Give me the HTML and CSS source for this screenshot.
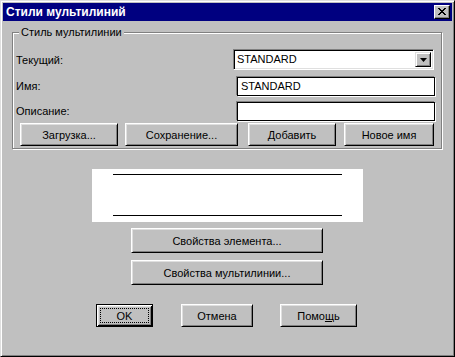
FILE: index.html
```html
<!DOCTYPE html>
<html lang="ru">

<head>
  <meta charset="UTF-8">
  <title>Стили мультилиний</title>
  <link rel="stylesheet" href="styles.css">
</head>

<body>
  <div class="window">
    <div class="titlebar">
      <span class="title">Стили мультилиний</span>
      <span class="close-btn">
        <svg width="8" height="7" viewBox="0 0 8 7">
          <path d="M0 0h2v1h-2zM6 0h2v1h-2zM1 1h2v1h-2zM5 1h2v1h-2zM2 2h4v1h-4zM3 3h2v1h-2zM2 4h4v1h-4zM1 5h2v1h-2zM5 5h2v1h-2zM0 6h2v1h-2zM6 6h2v1h-2z" fill="#000"/>
        </svg>
      </span>
    </div>

    <div class="content">
      <div class="group">
        <span class="legend">Стиль мультилинии</span>

        <div class="row row-combo">
          <span class="label">Текущий:</span>
          <div class="combo">
            <span class="combo-text">STANDARD</span>
            <span class="combo-arrow">
              <svg width="7" height="4" viewBox="0 0 7 4">
                <path d="M0 0h7l-3.5 4z" fill="#000"/>
              </svg>
            </span>
          </div>
        </div>

        <div class="row">
          <span class="label">Имя:</span>
          <div class="textbox">STANDARD</div>
        </div>

        <div class="row row-last">
          <span class="label">Описание:</span>
          <div class="textbox"></div>
        </div>

        <div class="btn-row">
          <button class="btn btn-load">Загрузка...</button>
          <button class="btn btn-save">Сохранение...</button>
          <button class="btn btn-add">Добавить</button>
          <button class="btn btn-rename">Новое имя</button>
        </div>
      </div>

      <div class="preview">
        <div class="preview-line"></div>
        <div class="preview-line"></div>
      </div>

      <div class="props">
        <button class="btn btn-wide">Свойства элемента...</button>
        <button class="btn btn-wide">Свойства мультилинии...</button>
      </div>

      <div class="footer">
        <button class="btn btn-ok"><span class="focus">OK</span></button>
        <button class="btn btn-cancel">Отмена</button>
        <button class="btn btn-help">Помо<u>щ</u>ь</button>
      </div>
    </div>
  </div>
</body>

</html>
```

FILE: styles.css
```css
* {
  margin: 0;
  padding: 0;
  box-sizing: border-box;
}

body {
  font-family: 'Liberation Sans', Arial, sans-serif;
  font-size: 11px;
  color: #000;
  background: #c0c0c0;
}

.window {
  width: 455px;
  height: 357px;
  background: #c0c0c0;
  border: 1px solid;
  border-color: #dfdfdf #000 #000 #dfdfdf;
  box-shadow: inset 1px 1px 0 #fff, inset -1px -1px 0 #808080;
  padding: 2px;
  display: flex;
  flex-direction: column;
}

.titlebar {
  height: 18px;
  background: #000080;
  color: #fff;
  display: flex;
  align-items: center;
  justify-content: space-between;
  padding: 0 2px 0 3px;
}

.title {
  font-weight: bold;
  font-size: 12px;
}

.close-btn {
  width: 16px;
  height: 14px;
  background: #c0c0c0;
  border: 1px solid;
  border-color: #fff #000 #000 #fff;
  box-shadow: inset -1px -1px 0 #808080;
  display: flex;
  align-items: center;
  justify-content: center;
  padding-bottom: 1px;
}

.content {
  flex: 1;
  padding: 11px 10px 0 9px;
  display: flex;
  flex-direction: column;
}

/* group box */
.group {
  position: relative;
  border: 1px solid #808080;
  box-shadow: 1px 1px 0 #fff, inset 1px 1px 0 #fff;
  padding: 16px 5px 2px 3px;
  display: flex;
  flex-direction: column;
}

.legend {
  position: absolute;
  left: 6px;
  top: -7px;
  background: #c0c0c0;
  padding: 0 2px;
  line-height: 13px;
}

.row {
  display: flex;
  align-items: center;
  height: 20px;
  margin-bottom: 5px;
}

.row-combo {
  height: 21px;
  margin-bottom: 6px;
}

.row-last {
  margin-bottom: 0;
}

.label {
  flex: 1;
}

.textbox {
  width: 198px;
  height: 19px;
  background: #fff;
  border: 1px solid #000;
  box-shadow: -1px -1px 0 #808080, 1px 1px 0 #fff;
  padding: 2px 0 0 3px;
  margin-right: 1px;
}

.combo {
  width: 201px;
  height: 21px;
  margin-right: 2px;
  background: #fff;
  border: 1px solid;
  border-color: #808080 #fff #fff #808080;
  box-shadow: inset 1px 1px 0 #000, inset -1px -1px 0 #dfdfdf;
  display: flex;
  align-items: stretch;
  padding: 2px;
}

.combo-text {
  flex: 1;
  padding: 1px 0 0 1px;
}

.combo-arrow {
  width: 16px;
  background: #c0c0c0;
  border: 1px solid;
  border-color: #dfdfdf #000 #000 #dfdfdf;
  box-shadow: inset 1px 1px 0 #fff, inset -1px -1px 0 #808080;
  display: flex;
  align-items: center;
  justify-content: center;
}

/* buttons */
.btn {
  font-family: inherit;
  font-size: 11px;
  color: #000;
  height: 23px;
  background: #c0c0c0;
  border: 1px solid;
  border-color: #fff #000 #000 #fff;
  box-shadow: inset 1px 1px 0 #dfdfdf, inset -1px -1px 0 #808080;
  display: flex;
  align-items: center;
  justify-content: center;
  padding-top: 1px;
}

.btn-row {
  display: flex;
  margin-top: 2px;
  padding-left: 4px;
}

.btn-load {
  width: 98px;
}

.btn-save {
  width: 113px;
  margin-left: 7px;
}

.btn-add {
  width: 88px;
  margin-left: 10px;
}

.btn-rename {
  width: 90px;
  margin-left: 8px;
}

/* preview */
.preview {
  align-self: center;
  width: 271px;
  height: 53px;
  margin-top: 20px;
  background: #fff;
  padding: 5px 21px 6px;
  display: flex;
  flex-direction: column;
  justify-content: space-between;
}

.preview-line {
  height: 1px;
  background: #000;
}

.props {
  display: flex;
  flex-direction: column;
  align-items: center;
  gap: 7px;
  margin-top: 6px;
}

.btn-wide {
  width: 192px;
  height: 25px;
}

.footer {
  display: flex;
  justify-content: center;
  margin-top: 19px;
  padding-right: 1px;
}

.btn-ok {
  width: 57px;
  border: 1px solid #000;
  box-shadow: inset 1px 1px 0 #fff, inset -1px -1px 0 #000, inset 2px 2px 0 #dfdfdf, inset -2px -2px 0 #808080;
  padding: 3px;
}

.focus {
  flex: 1;
  align-self: stretch;
  border: 1px dotted #000;
  display: flex;
  align-items: center;
  justify-content: center;
}

.btn-cancel {
  width: 72px;
  margin-left: 28px;
}

.btn-help {
  width: 77px;
  margin-left: 27px;
}
```
